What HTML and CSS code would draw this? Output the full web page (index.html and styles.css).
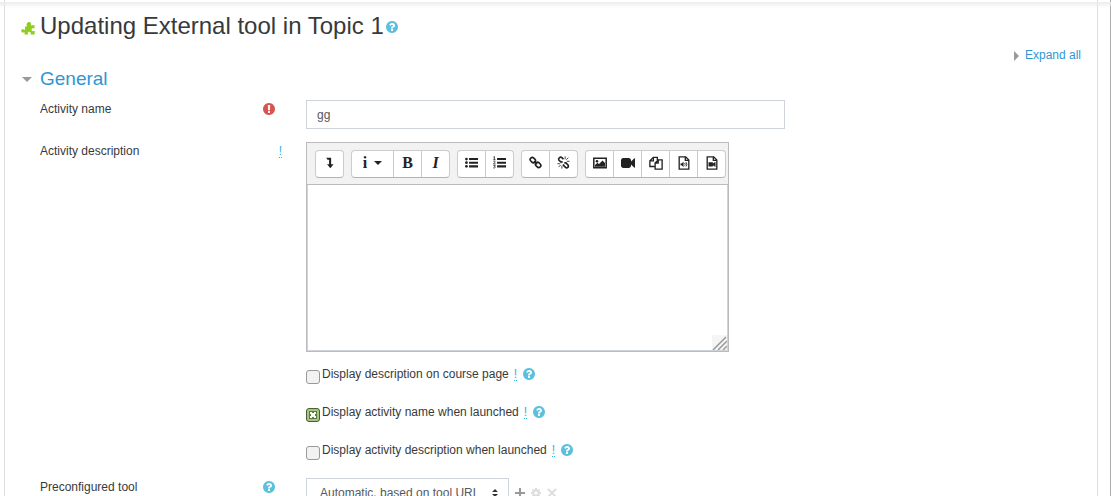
FILE: index.html
```html
<!DOCTYPE html>
<html lang="en">
<head>
    <meta charset="UTF-8">
    <meta name="viewport" content="width=device-width, initial-scale=1.0">
    <title>Updating External tool in Topic 1</title>
    <link rel="stylesheet" href="styles.css">
</head>
<body>
    <svg class="sprite" aria-hidden="true">
        <symbol id="help" viewBox="128 128 1536 1536">
            <path d="M1024 1376v-192q0-14-9-23t-23-9h-192q-14 0-23 9t-9 23v192q0 14 9 23t23 9h192q14 0 23-9t9-23zm256-672q0-88-55.5-163t-138.500-116-170-41q-243 0-371 213-15 24 8 42l132 100q7 6 19 6 16 0 25-12 53-68 86-92 34-24 86-24 48 0 85.500 26t37.500 59q0 38-20 61t-68 45q-63 28-115.500 86.500t-52.500 125.500v36q0 14 9 23t23 9h192q14 0 23-9t9-23q0-19 21.500-49.500t54.500-49.500q32-18 49-28.500t46-35 44.500-48 28-60.500 12.500-81zm384 192q0 209-103 385.500t-279.500 279.500-385.500 103-385.500-103-279.500-279.500-103-385.500 103-385.500 279.500-279.500 385.500-103 385.500 103 279.500 279.500 103 385.500z"/>
        </symbol>
    </svg>

    <div class="page">
        <main class="content">
            <h1>
                <svg class="puzzle" viewBox="0 0 14 14" aria-hidden="true">
                    <path d="M4 5.500h2.200C4.800 3.500 6 1 8 1s2.600 2 1.800 3.500L13.500 4v3.800c-2-1-3-.2-3 1s1.200 2 3.200 1V13.500H9.500c.8-2-.3-2.700-1.300-2.700S6.400 12 7 13.500H3.500V11C1.800 12.200 0 11.500.2 9.800S2.200 8 4 9z"/>
                </svg>
                <span>Updating External tool in Topic 1</span>
                <a href="#" class="help" aria-label="Help"><svg><use href="#help"/></svg></a>
            </h1>

            <div class="expand"><a href="#">Expand all</a></div>

            <form>
                <h2><a href="#">General</a></h2>

                <div class="row">
                    <div class="row-label">
                        <label for="name">Activity name</label>
                        <svg class="required" viewBox="128 128 1536 1536" role="img" aria-label="Required">
                            <path d="M896 128q209 0 385.500 103t279.500 279.500 103 385.500-103 385.500-279.500 279.500-385.500 103-385.500-103-279.500-279.500-103-385.500 103-385.500 279.500-279.500 385.500-103zm128 1247v-190q0-14-9-23.500t-22-9.500h-192q-13 0-23 10t-10 23v190q0 13 10 23t23 10h192q13 0 22-9.500t9-23.500zm-2-344l18-621q0-12-10-18-10-8-24-8h-220q-14 0-24 8-10 6-10 18l17 621q0 10 10 17.500t24 7.500h185q14 0 23.500-7.500t10.500-17.500z"/>
                        </svg>
                    </div>
                    <div class="row-field">
                        <input type="text" id="name" class="text" value="gg">
                    </div>
                </div>

                <div class="row">
                    <div class="row-label wide">
                        <label for="description">Activity description</label>
                        <abbr title="Advanced element">!</abbr>
                    </div>
                    <div class="row-field">
                        <div class="editor">
                            <div class="toolbar">
                                <div class="group">
                                    <button type="button" aria-label="Show more buttons"><svg viewBox="0 0 16 16"><path d="M4 2h6v8h3l-4 5-4-5h2.500V4.500H5.500z"/></svg></button>
                                </div>
                                <div class="group">
                                    <button type="button" class="style" aria-label="Paragraph styles">i<span class="caret"></span></button>
                                    <button type="button" aria-label="Bold">B</button>
                                    <button type="button" class="italic" aria-label="Italic">I</button>
                                </div>
                                <div class="group">
                                    <button type="button" aria-label="Unordered list"><svg viewBox="0 0 16 16"><path d="M5 2.500h11v2.500H5zM5 7h11v2.500H5zM5 11.500h11V14H5z"/><circle cx="1.800" cy="3.700" r="1.700"/><circle cx="1.800" cy="8.200" r="1.700"/><circle cx="1.800" cy="12.700" r="1.700"/></svg></button>
                                    <button type="button" aria-label="Ordered list"><svg viewBox="0 0 16 16"><path d="M5 2.500h11v2.500H5zM5 7h11v2.500H5zM5 11.500h11V14H5z"/><path class="line thin" d="M.5 1.500l1.200-.8V4.500M.3 4.600h2.800M.5 6.800c1-1 2.500-.2 2 .8L.6 9.800h2.500M.5 11.500h2.200l-1 1.300c2 0 1.500 2.500-1.400 1.800"/></svg></button>
                                </div>
                                <div class="group">
                                    <button type="button" aria-label="Link"><svg viewBox="0 0 16 16"><rect class="line" x="1.200" y="2.400" width="7" height="5.200" rx="2.600" transform="rotate(45 4.700 5)"/><rect class="line" x="7.800" y="8.400" width="7" height="5.200" rx="2.600" transform="rotate(45 11.300 11)"/><path class="line" d="M6 6.500l4 3.500"/></svg></button>
                                    <button type="button" aria-label="Unlink"><svg viewBox="0 0 16 16"><path class="line" d="M8 4L6 2C4 .3 1 3 2.500 5.200L5 7.500l2-.5M9 8.500l2 0 2.500 2.500c1.500 2.300-1 4.500-3 3L8 11.500V10"/><path class="line thin" d="M10 4V.5M11.500 4.500L14 2M12 6.500h3.500M.5 9.500H4M4.500 11L2 13.500M6 12v3.500"/></svg></button>
                                </div>
                                <div class="group">
                                    <button type="button" aria-label="Image"><svg class="large" viewBox="0 0 14 14"><path class="line file" d="M.8 2.300h12.400v9.400H.8z"/><circle cx="4" cy="5.200" r="1.300"/><path d="M2 10.700V9l2.500-2.200L6 8l3.500-3.500L12 7v3.700z"/></svg></button>
                                    <button type="button" aria-label="Media"><svg class="large" viewBox="0 0 1792 1792"><path d="M1792 352v1088q0 42-39 59-13 5-25 5-27 0-45-19l-403-403v166q0 119-84.500 203.500t-203.500 84.500h-704q-119 0-203.500-84.500t-84.500-203.500v-704q0-119 84.500-203.500t203.500-84.500h704q119 0 203.500 84.500t84.500 203.500v165l403-402q18-19 45-19 12 0 25 5 39 17 39 59z"/></svg></button>
                                    <button type="button" aria-label="Manage files"><svg class="large" viewBox="0 0 16 16"><path class="line file" d="M6.500 12H1V5.500L5 1.500h4.500v3M5 1.500v4H1M7 8l3.500-3.500H15V15H7zM10.500 4.500V8H7"/></svg></button>
                                    <button type="button" aria-label="Record audio"><svg class="large" viewBox="0 0 16 16"><path class="line file" d="M2.500 1h7.500l3.500 3.500V15h-11zM9.500 1v4h4"/><path d="M4 8.500h1.200L7.500 6.500v6L5.200 10.500H4z"/><path class="line thin" d="M8.800 8q1.200 1.500 0 3M10.300 7q2 2.500 0 5"/></svg></button>
                                    <button type="button" aria-label="Record video"><svg class="large" viewBox="0 0 16 16"><path class="line file" d="M2.500 1h7.500l3.500 3.500V15h-11zM9.500 1v4h4"/><path d="M4 7h5v1.500l3-2v6l-3-2V12H4z"/></svg></button>
                                </div>
                            </div>
                            <div class="editor-body">
                                <textarea id="description"></textarea>
                                <svg class="grip" viewBox="0 0 15 15" aria-hidden="true"><path d="M1 15L14 2M6 15l9-9M11 15l4-4"/></svg>
                            </div>
                        </div>
                    </div>
                </div>

                <div class="checks">
                    <div class="check">
                        <input type="checkbox" id="show-description">
                        <label for="show-description">Display description on course page</label>
                        <abbr title="Advanced element">!</abbr>
                        <a href="#" class="help" aria-label="Help"><svg><use href="#help"/></svg></a>
                    </div>
                    <div class="check">
                        <input type="checkbox" id="launch-name" checked>
                        <label for="launch-name">Display activity name when launched</label>
                        <abbr title="Advanced element">!</abbr>
                        <a href="#" class="help" aria-label="Help"><svg><use href="#help"/></svg></a>
                    </div>
                    <div class="check">
                        <input type="checkbox" id="launch-description">
                        <label for="launch-description">Display activity description when launched</label>
                        <abbr title="Advanced element">!</abbr>
                        <a href="#" class="help" aria-label="Help"><svg><use href="#help"/></svg></a>
                    </div>
                </div>

                <div class="row">
                    <div class="row-label">
                        <label for="tool">Preconfigured tool</label>
                        <a href="#" class="help" aria-label="Help"><svg><use href="#help"/></svg></a>
                    </div>
                    <div class="row-field tool">
                        <div class="select">
                            <select id="tool">
                                <option>Automatic, based on tool URL</option>
                            </select>
                            <svg viewBox="0 0 6 8" aria-hidden="true"><path d="M3 0l3 3H0zM0 5h6L3 8z"/></svg>
                        </div>
                        <a href="#" class="action" aria-label="Add tool"><svg viewBox="0 0 10 10"><path d="M5 0v10M0 5h10"/></svg></a>
                        <a href="#" class="action off" aria-label="Edit tool"><svg viewBox="0 0 10 10"><circle cx="5" cy="5" r="2.600"/><path d="M5 0v2M5 8v2M0 5h2M8 5h2M1.500 1.500l1.400 1.400M7.100 7.100l1.400 1.400M1.500 8.500l1.400-1.400M7.100 2.900l1.400-1.400"/></svg></a>
                        <a href="#" class="action off" aria-label="Delete tool"><svg viewBox="0 0 10 10"><path d="M1 1l8 8M9 1L1 9"/></svg></a>
                    </div>
                </div>
            </form>
        </main>
    </div>
</body>
</html>
```
FILE: styles.css
```css
* {
    box-sizing: border-box;
}

body {
    margin: 0;
    height: 100vh;
    overflow: hidden;
    font-family: "Liberation Sans", Arial, sans-serif;
    font-size: 12px;
    line-height: 18px;
    color: #373a3c;
    background-color: #fff;
}

.sprite {
    position: absolute;
    width: 0;
    height: 0;
}

a {
    color: #2f96d3;
    text-decoration: none;
}

.page {
    padding: 0 12px 0 4px;
    border-right: 1px solid #aaa;
}

/* shadow of the fixed navbar */
.page::before {
    content: "";
    position: absolute;
    top: 2px;
    left: 0;
    right: 0;
    height: 6px;
    background: linear-gradient(#ececec, rgba(255, 255, 255, 0));
}

.content {
    min-height: 100vh;
    padding: 10px 16px 0 15px;
    border: solid #ddd;
    border-width: 0 1px;
}

h1 {
    display: flex;
    align-items: center;
    margin: 0;
    font-size: 24px;
    font-weight: 400;
    line-height: 32px;
}

.puzzle {
    width: 14px;
    height: 14px;
    margin: 4px 5px 0 1px;
    fill: #8fce1e;
}

.help {
    display: flex;
    flex: none;
}

.help svg,
.required {
    width: 12px;
    height: 12px;
    fill: #5bc0de;
}

h1 .help {
    margin: 2px 0 0 2px;
}

.required {
    fill: #d9534f;
}

.expand {
    margin-top: 4px;
    text-align: right;
}

.expand a::before {
    content: "";
    display: inline-block;
    margin-right: 6px;
    border: solid transparent;
    border-width: 5px 0 5px 5px;
    border-left-color: #999;
    vertical-align: -2px;
}

h2 {
    margin: 3px 0 9px;
    font-size: 19px;
    font-weight: 400;
    line-height: 24px;
}

h2 a {
    display: flex;
    align-items: center;
}

h2 a::before {
    content: "";
    margin: 0 8px 0 2px;
    border: solid transparent;
    border-width: 5px 5px 0;
    border-top-color: #999;
}

.row {
    display: flex;
    margin-bottom: 13px;
    padding-left: 20px;
}

.row-label {
    display: flex;
    justify-content: space-between;
    align-items: center;
    flex: 0 0 266px;
    height: 18px;
    padding-right: 31px;
}

.row-label.wide {
    padding-right: 24px;
}

.row-field {
    flex: 1;
    min-width: 0;
}

abbr {
    color: #2fb4e0;
    line-height: 12px;
    text-decoration: none;
    border-bottom: 1px dotted #2fb4e0;
}

.text {
    display: block;
    width: 100%;
    max-width: 479px;
    height: 29px;
    padding: 0 10px;
    border: 1px solid #ced4da;
    font: inherit;
    color: #55595c;
}

.editor {
    max-width: 423px;
    border: 1px solid #bbb;
}

.toolbar {
    display: flex;
    gap: 7px;
    overflow: hidden;
    padding: 7px 0 6px 8px;
    background-color: #f2f2f2;
    border-bottom: 1px solid #bbb;
}

.group {
    display: flex;
    flex: none;
    height: 28px;
    background-color: #fff;
    border: 1px solid #ccc;
    border-bottom-color: #b3b3b3;
    border-radius: 4px;
}

.group button {
    display: flex;
    align-items: center;
    justify-content: center;
    width: 28px;
    padding: 0 0 3px;
    border: 0;
    border-right: 1px solid #ccc;
    background: none;
    font: bold 16px "Liberation Serif", serif;
    color: #222;
}

.group button:last-child {
    width: 27px;
    border-right: 0;
}

.group .style {
    width: 42px;
    gap: 7px;
}

.group .italic {
    font-style: italic;
}

.caret {
    border: solid transparent;
    border-width: 4px 4px 0;
    border-top-color: #222;
}

.group svg {
    width: 13px;
    height: 13px;
    fill: #222;
}

.group .large {
    width: 14px;
    height: 14px;
}

.group .line {
    fill: none;
    stroke: #222;
    stroke-width: 2;
}

.group .file {
    stroke-width: 1.5;
}

.group .thin {
    stroke-width: 1;
}

.editor-body {
    position: relative;
    border: 1px solid #ced4da;
    border-top-width: 0;
}

.editor-body textarea {
    display: block;
    width: 100%;
    height: 165px;
    padding: 6px 10px;
    border: 0;
    font: inherit;
    resize: none;
}

.grip {
    position: absolute;
    right: 0;
    bottom: 0;
    width: 15px;
    height: 15px;
    background-color: #f5f5f5;
    stroke: #999;
    stroke-width: 1.5;
}

.checks {
    display: flex;
    flex-direction: column;
    gap: 20px;
    margin-bottom: 19px;
    padding-left: 286px;
}

.check {
    display: flex;
    align-items: center;
    height: 18px;
}

.check input {
    appearance: none;
    flex: none;
    width: 14px;
    height: 14px;
    margin: 6px 2px 0 0;
    border: 1px solid #999;
    border-radius: 3px;
    background-color: #f2f2f2;
}

.check input:checked {
    border-color: #4c5e3a;
    background:
        linear-gradient(45deg, transparent 36%, #fff 36%, #fff 64%, transparent 64%) center / 6px 6px no-repeat,
        linear-gradient(-45deg, transparent 36%, #fff 36%, #fff 64%, transparent 64%) center / 6px 6px no-repeat,
        linear-gradient(#5f7c45, #5f7c45) center / 8px 8px no-repeat,
        #a3c77e;
}

.check abbr {
    margin: 0 6px 0 5px;
}

.tool {
    display: flex;
    align-items: center;
    gap: 6px;
}

.select {
    position: relative;
}

.select select {
    appearance: none;
    display: block;
    width: 203px;
    height: 29px;
    padding: 0 24px 0 13px;
    border: 1px solid #ced4da;
    background-color: #fff;
    font: inherit;
    color: #55595c;
}

.select svg {
    position: absolute;
    top: 11px;
    right: 11px;
    width: 6px;
    height: 8px;
    fill: #333;
}

.action {
    display: flex;
}

.action svg {
    width: 10px;
    height: 10px;
    fill: none;
    stroke: #999;
    stroke-width: 2;
}

.action.off svg {
    stroke: #ddd;
}
```
